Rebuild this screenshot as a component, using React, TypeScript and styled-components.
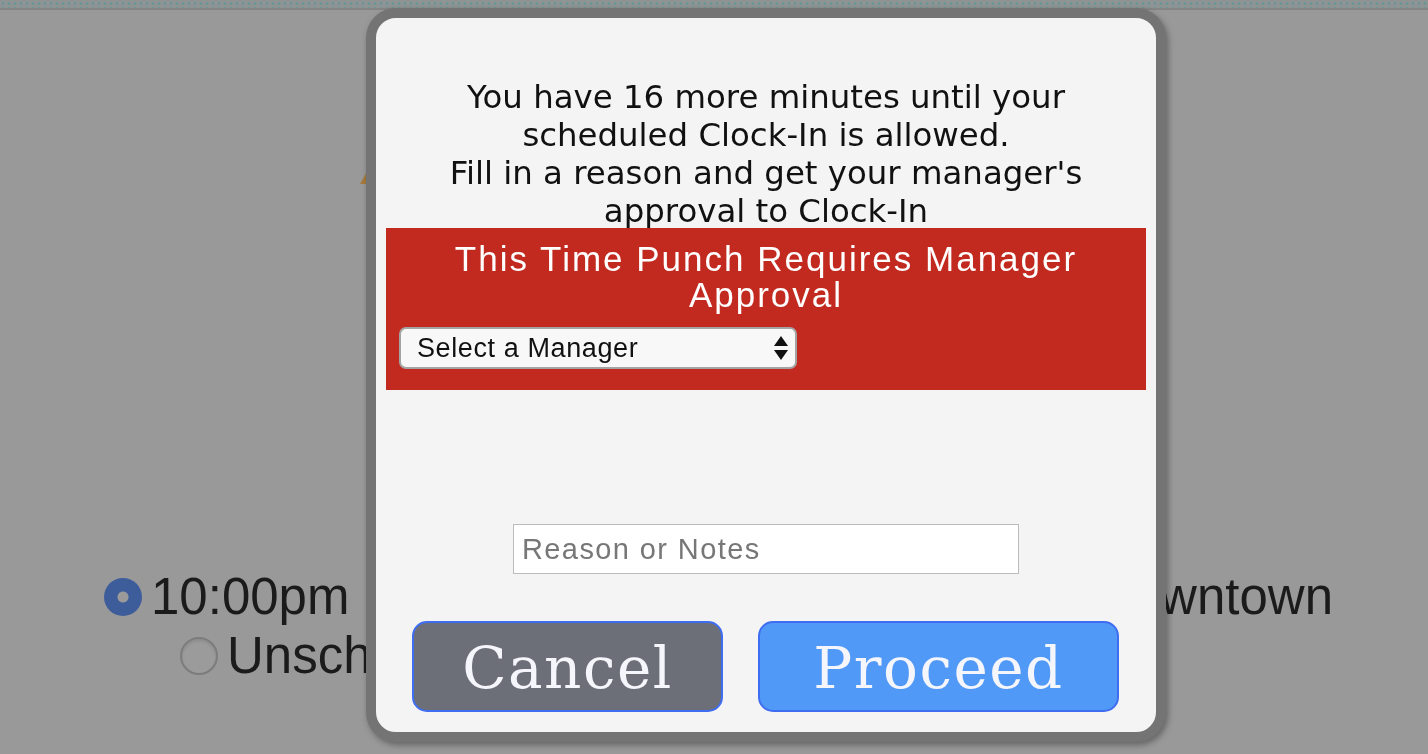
import React from 'react';
import styled, { createGlobalStyle } from 'styled-components';

const GlobalStyle = createGlobalStyle`
  html, body {
    margin: 0;
    padding: 0;
    width: 1428px;
    height: 754px;
    overflow: hidden;
    background: #999999;
    font-family: "Liberation Sans", Arial, sans-serif;
  }
`;

// Page behind the dimming overlay
const Page = styled.div`
  width: 1428px;
  height: 754px;
  display: flex;
  flex-direction: column;
  background: #999999;
`;

const TopStrip = styled.div`
  height: 8px;
  background-color: #8e9494;
  background-image: radial-gradient(circle, #6f9696 1.2px, transparent 1.8px);
  background-size: 6px 5px;
  background-position: 0 1px;
  border-bottom: 2px solid #858585;
`;

const StatusHeader = styled.div`
  padding: 130px 0 0 360px;
  height: 44px;
`;

const ShiftList = styled.div`
  display: flex;
  flex-direction: column;
  padding-top: 383px;
`;

const ShiftRow = styled.div<{ $indent: number }>`
  display: flex;
  align-items: center;
  justify-content: space-between;
  padding-left: ${(p) => p.$indent}px;
  padding-right: 95px;
  height: 59px;
  font-size: 51px;
  color: #1b1b1b;
`;

const RowLeft = styled.div`
  display: flex;
  align-items: center;
  gap: 9px;
`;

const Radio = styled.span<{ $checked?: boolean }>`
  width: 38px;
  height: 38px;
  border-radius: 50%;
  box-sizing: border-box;
  flex-shrink: 0;
  ${(p) =>
    p.$checked
      ? `background: radial-gradient(circle, #9a9a9a 0 5px, #3d5c9a 6px);`
      : `border: 2px solid #7c7c7c; background: #9b9b9b; box-shadow: inset 0 2px 3px rgba(0,0,0,0.1);`}
`;

const Overlay = styled.div`
  position: fixed;
  left: 366px;
  top: 8px;
`;

const Modal = styled.div`
  width: 800px;
  height: 734px;
  box-sizing: border-box;
  border: 10px solid #747474;
  border-radius: 30px;
  background: #f4f4f4;
  box-shadow: 2px 3px 6px rgba(0, 0, 0, 0.35);
  display: flex;
  flex-direction: column;
  padding: 60px 10px 20px;
`;

const Message = styled.p`
  margin: 0 0 -2px;
  text-align: center;
  font-family: "DejaVu Sans", Verdana, sans-serif;
  font-size: 32.4px;
  line-height: 38px;
  color: #111111;
  padding: 0 30px;
`;

const ApprovalBanner = styled.div`
  background: #c22a20;
  padding: 13px 13px 21px;
  display: flex;
  flex-direction: column;
  gap: 14px;
`;

const BannerTitle = styled.div`
  color: #ffffff;
  text-align: center;
  font-size: 35px;
  line-height: 36px;
  letter-spacing: 2px;
  padding: 0 10px;
`;

const SelectBox = styled.div`
  width: 398px;
  height: 42px;
  box-sizing: border-box;
  border: 2px solid #a4a4a4;
  border-radius: 7px;
  background: #f8f8f8;
  display: flex;
  align-items: center;
  justify-content: space-between;
  padding: 0 6px 0 16px;
  font-size: 27px;
  letter-spacing: 0.6px;
  color: #111111;
`;

const Spacer = styled.div`
  flex: 1;
`;

const NotesInput = styled.input`
  align-self: center;
  width: 506px;
  height: 50px;
  box-sizing: border-box;
  border: 1px solid #bcbcbc;
  background: #ffffff;
  padding: 0 8px;
  font-family: "Liberation Sans", Arial, sans-serif;
  font-size: 29px;
  letter-spacing: 1.4px;
  color: #222;
  outline: none;
  &::placeholder {
    color: #777777;
  }
`;

const ButtonRow = styled.div`
  display: flex;
  justify-content: space-between;
  padding: 0 27px 0 26px;
  margin-top: 47px;
`;

const ActionButton = styled.button<{ $variant: 'cancel' | 'proceed' }>`
  width: ${(p) => (p.$variant === 'cancel' ? 311 : 361)}px;
  height: 91px;
  box-sizing: border-box;
  border: 2px solid #3f6df2;
  border-radius: 15px;
  background: ${(p) => (p.$variant === 'cancel' ? '#6d6f78' : '#5199f7')};
  color: #f5f5fc;
  font-family: "DejaVu Serif", "Liberation Serif", serif;
  font-size: 58px;
  letter-spacing: 1.5px;
  padding: 2px 0 0;
  cursor: pointer;
`;

const Arrows = () => (
  <svg width="16" height="26" viewBox="0 0 16 26">
    <path d="M8 1 L15 11 H1 Z" fill="#111" />
    <path d="M8 25 L15 15 H1 Z" fill="#111" />
  </svg>
);

const WarningIcon = () => (
  <svg width="50" height="44" viewBox="0 0 50 44">
    <path d="M25 0 L50 44 H0 Z" fill="#a57a3c" />
  </svg>
);

export default function App() {
  return (
    <>
      <GlobalStyle />
      <Page>
        <TopStrip />
        <StatusHeader>
          <WarningIcon />
        </StatusHeader>
        <ShiftList>
          <ShiftRow $indent={104}>
            <RowLeft>
              <Radio $checked />
              <span>10:00pm - 6:00am</span>
            </RowLeft>
            <span>Downtown</span>
          </ShiftRow>
          <ShiftRow $indent={180}>
            <RowLeft>
              <Radio />
              <span>Unscheduled</span>
            </RowLeft>
          </ShiftRow>
        </ShiftList>
      </Page>
      <Overlay>
        <Modal>
          <Message>
            You have 16 more minutes until your scheduled Clock-In is allowed.
            <br />
            Fill in a reason and get your manager's approval to Clock-In
          </Message>
          <ApprovalBanner>
            <BannerTitle>This Time Punch Requires Manager Approval</BannerTitle>
            <SelectBox>
              <span>Select a Manager</span>
              <Arrows />
            </SelectBox>
          </ApprovalBanner>
          <Spacer />
          <NotesInput placeholder="Reason or Notes" />
          <ButtonRow>
            <ActionButton $variant="cancel">Cancel</ActionButton>
            <ActionButton $variant="proceed">Proceed</ActionButton>
          </ButtonRow>
        </Modal>
      </Overlay>
    </>
  );
}
